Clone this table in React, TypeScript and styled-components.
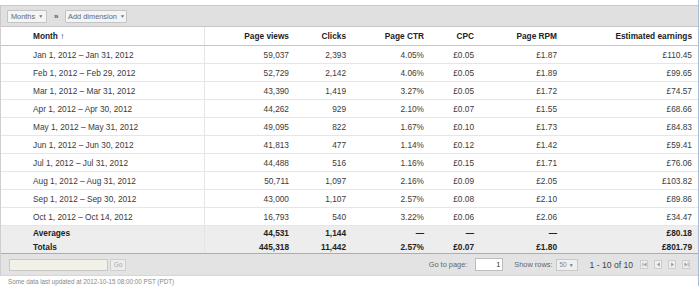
import React from "react";
import styled, { createGlobalStyle } from "styled-components";

const Global = createGlobalStyle`
  html, body { margin: 0; padding: 0; background: #fff; }
  body { font-family: "Liberation Sans", Arial, sans-serif; font-size: 8.3px; color: #333; }
`;

const COLS = "204px 90px 57px 78px 50px 83px 135px";

const Page = styled.div`
  width: 698px;
  padding-top: 5px;
  border-right: 1px solid #a9bdd8;
`;

const Toolbar = styled.div`
  height: 20px;
  display: flex;
  align-items: center;
  gap: 6px;
  padding-left: 6px;
  background: #e0e0e0;
  border-top: 1px solid #c9c9c9;
  border-left: 1px solid #c9c9c9;
`;

const DimButton = styled.div<{ $w: number }>`
  width: ${(p) => p.$w}px;
  height: 13px;
  box-sizing: border-box;
  display: flex;
  align-items: center;
  justify-content: center;
  gap: 3px;
  background: #f4f4f4;
  border: 1px solid #c4c4c4;
  border-radius: 1px;
  color: #666;
  font-size: 7.4px;
`;

const Caret = styled.span`
  font-size: 5px;
  color: #777;
`;

const Sep = styled.span`
  color: #555;
  font-size: 8px;
  font-weight: bold;
  padding: 0 1px;
`;

const Table = styled.div`
  border-left: 1px solid #cfcfcf;
`;

const Row = styled.div<{ $h: number; $kind?: "head" | "sum" | "body" }>`
  display: grid;
  grid-template-columns: ${COLS};
  height: ${(p) => p.$h}px;
  box-sizing: border-box;
  align-items: center;
  background: ${(p) => (p.$kind === "sum" ? "#ededed" : "#fff")};
  border-bottom: ${(p) =>
    p.$kind === "head" ? "1px solid #c6c6c6" : p.$kind === "sum" ? "none" : "1px solid #e6e6e6"};
  font-weight: ${(p) => (p.$kind === "body" ? "normal" : "bold")};
  color: ${(p) => (p.$kind === "body" ? "#3a3a3a" : "#222")};
  ${(p) => (p.$kind === "head" ? "border-top: 1px solid #c6c6c6;" : "")}
`;

const Cell = styled.div<{ $first?: boolean }>`
  height: 100%;
  display: flex;
  align-items: center;
  justify-content: ${(p) => (p.$first ? "flex-start" : "flex-end")};
  padding: ${(p) => (p.$first ? "0 0 0 32px" : "0 6px 0 0")};
  white-space: nowrap;
  box-sizing: border-box;
  ${(p) => (p.$first ? "border-right: 1px solid #e4e4e4;" : "")}
`;

const SumBlock = styled.div`
  border-bottom: 1px solid #adadad;
  background: #ededed;
`;

const Footer = styled.div`
  height: 21px;
  display: flex;
  align-items: center;
  justify-content: space-between;
  padding: 0 8px 0 8px;
  background: #e3e3e3;
  border-left: 1px solid #cfcfcf;
  border-bottom: 1px solid #d6d6d6;
  color: #555;
  font-size: 7.4px;
`;

const Group = styled.div`
  display: flex;
  align-items: center;
`;

const SearchInput = styled.div`
  width: 99px;
  height: 12px;
  box-sizing: border-box;
  background: #f2f1e8;
  border: 1px solid #c8c8c8;
`;

const GoBtn = styled.div`
  margin-left: 2px;
  width: 16px;
  height: 12px;
  box-sizing: border-box;
  border: 1px solid #cfcfcf;
  background: #ececec;
  color: #aaa;
  font-size: 6.5px;
  display: flex;
  align-items: center;
  justify-content: center;
`;

const Label = styled.span<{ $ml?: number }>`
  margin-left: ${(p) => p.$ml ?? 0}px;
  color: #666;
`;

const PageInput = styled.div`
  margin-left: 8px;
  width: 28px;
  height: 13px;
  box-sizing: border-box;
  background: #fff;
  border: 1px solid #bdbdbd;
  display: flex;
  align-items: center;
  justify-content: flex-end;
  padding-right: 2px;
  color: #333;
`;

const RowsSelect = styled.div`
  margin-left: 3px;
  width: 22px;
  height: 12px;
  box-sizing: border-box;
  background: #efefef;
  border: 1px solid #c8c8c8;
  display: flex;
  align-items: center;
  justify-content: center;
  gap: 2px;
  color: #888;
  font-size: 6.5px;
`;

const Range = styled.span`
  margin-left: 12px;
  color: #444;
  font-size: 8.6px;
`;

const NavBtns = styled.div`
  margin-left: 7px;
  display: flex;
  gap: 6px;
`;

const NavBtn = styled.div`
  width: 8px;
  height: 9px;
  box-sizing: border-box;
  border: 1px solid #cdcdcd;
  background: #eee;
  display: flex;
  align-items: center;
  justify-content: center;
`;

const Note = styled.div`
  padding: 2px 0 0 8px;
  color: #888;
  font-size: 6.3px;
  line-height: 8px;
  white-space: nowrap;
`;

type R = [string, string, string, string, string, string, string];

const rows: R[] = [
  ["Jan 1, 2012 – Jan 31, 2012", "59,037", "2,393", "4.05%", "£0.05", "£1.87", "£110.45"],
  ["Feb 1, 2012 – Feb 29, 2012", "52,729", "2,142", "4.06%", "£0.05", "£1.89", "£99.65"],
  ["Mar 1, 2012 – Mar 31, 2012", "43,390", "1,419", "3.27%", "£0.05", "£1.72", "£74.57"],
  ["Apr 1, 2012 – Apr 30, 2012", "44,262", "929", "2.10%", "£0.07", "£1.55", "£68.66"],
  ["May 1, 2012 – May 31, 2012", "49,095", "822", "1.67%", "£0.10", "£1.73", "£84.83"],
  ["Jun 1, 2012 – Jun 30, 2012", "41,813", "477", "1.14%", "£0.12", "£1.42", "£59.41"],
  ["Jul 1, 2012 – Jul 31, 2012", "44,488", "516", "1.16%", "£0.15", "£1.71", "£76.06"],
  ["Aug 1, 2012 – Aug 31, 2012", "50,711", "1,097", "2.16%", "£0.09", "£2.05", "£103.82"],
  ["Sep 1, 2012 – Sep 30, 2012", "43,000", "1,107", "2.57%", "£0.08", "£2.10", "£89.86"],
  ["Oct 1, 2012 – Oct 14, 2012", "16,793", "540", "3.22%", "£0.06", "£2.06", "£34.47"],
];

const head: R = ["Month ↑", "Page views", "Clicks", "Page CTR", "CPC", "Page RPM", "Estimated earnings"];
const avg: R = ["Averages", "44,531", "1,144", "—", "—", "—", "£80.18"];
const tot: R = ["Totals", "445,318", "11,442", "2.57%", "£0.07", "£1.80", "£801.79"];

const Cells = ({ r }: { r: R }) => (
  <>
    {r.map((v, i) => (
      <Cell key={i} $first={i === 0}>
        {v}
      </Cell>
    ))}
  </>
);

const Icon = ({ d }: { d: string }) => (
  <svg width="5" height="5" viewBox="0 0 5 5">
    <path d={d} fill="#999" />
  </svg>
);

export default function App() {
  return (
    <>
      <Global />
      <Page>
        <Toolbar>
          <DimButton $w={40}>
            Months <Caret>▼</Caret>
          </DimButton>
          <Sep>»</Sep>
          <DimButton $w={62}>
            Add dimension <Caret>▼</Caret>
          </DimButton>
        </Toolbar>
        <Table>
          <Row $h={20} $kind="head">
            <Cells r={head} />
          </Row>
          {rows.map((r, i) => (
            <Row key={i} $h={18} $kind="body">
              <Cells r={r} />
            </Row>
          ))}
          <SumBlock>
            <Row $h={14} $kind="sum">
              <Cells r={avg} />
            </Row>
            <Row $h={13} $kind="sum">
              <Cells r={tot} />
            </Row>
          </SumBlock>
        </Table>
        <Footer>
          <Group>
            <SearchInput />
            <GoBtn>Go</GoBtn>
          </Group>
          <Group>
            <Label>Go to page:</Label>
            <PageInput>1</PageInput>
            <Label $ml={11}>Show rows:</Label>
            <RowsSelect>
              50 <Caret>▼</Caret>
            </RowsSelect>
            <Range>1 - 10 of 10</Range>
            <NavBtns>
              <NavBtn>
                <Icon d="M0.5 0.5h0.8v4h-0.8zM4.5 0.5v4l-2.8-2z" />
              </NavBtn>
              <NavBtn>
                <Icon d="M3.8 0.5v4l-2.8-2z" />
              </NavBtn>
              <NavBtn>
                <Icon d="M1.2 0.5v4l2.8-2z" />
              </NavBtn>
              <NavBtn>
                <Icon d="M0.5 0.5v4l2.8-2zM3.7 0.5h0.8v4h-0.8z" />
              </NavBtn>
            </NavBtns>
          </Group>
        </Footer>
        <Note>Some data last updated at 2012-10-15 08:00:00 PST (PDT)</Note>
      </Page>
    </>
  );
}
